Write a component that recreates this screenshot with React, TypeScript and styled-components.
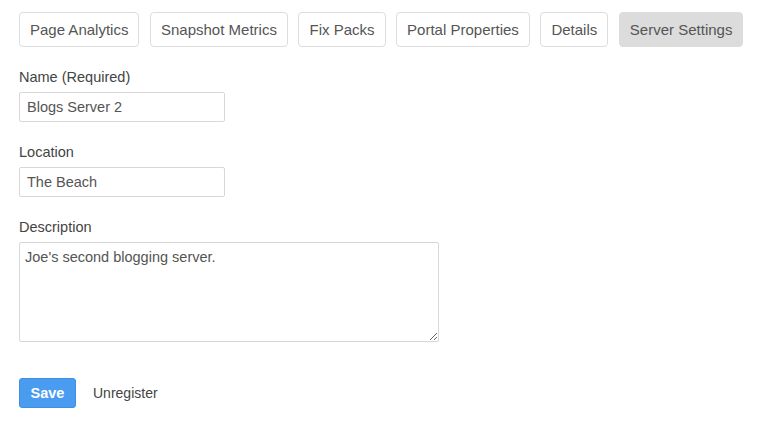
import React from "react";
import styled, { createGlobalStyle } from "styled-components";

const Global = createGlobalStyle`
  html, body { margin: 0; padding: 0; background: #fff; }
  body { font-family: "Liberation Sans", Arial, Helvetica, sans-serif; color: #555; }
  * { box-sizing: border-box; }
`;

const Page = styled.div`
  padding: 12px 19px 0;
`;

const Tabs = styled.nav`
  display: flex;
  gap: 10.6px;
`;

const Tab = styled.button<{ $active?: boolean }>`
  font-family: inherit;
  font-size: 15px;
  line-height: 20px;
  padding: 0 10px;
  height: 35px;
  color: #555;
  background: ${(p) => (p.$active ? "#dcdcdc" : "#fff")};
  border: 1px solid ${(p) => (p.$active ? "#dcdcdc" : "#dddddd")};
  border-radius: 4px;
  cursor: pointer;
  white-space: nowrap;
`;

const Form = styled.form`
  display: flex;
  flex-direction: column;
  margin-top: 20px;
`;

const Group = styled.div`
  display: flex;
  flex-direction: column;
  align-items: flex-start;
  margin-bottom: 20px;
`;

const Label = styled.label`
  font-size: 14.5px;
  line-height: 20px;
  color: #444;
  margin-bottom: 5px;
`;

const Input = styled.input`
  width: 206px;
  height: 30px;
  padding: 0 7px;
  font-family: inherit;
  font-size: 14.5px;
  color: #555;
  border: 1px solid #d8d8d8;
  border-radius: 2px;
  outline: none;
`;

const TextArea = styled.textarea`
  width: 420px;
  height: 100px;
  padding: 4px 5px;
  font-family: inherit;
  font-size: 14.5px;
  line-height: 20px;
  color: #555;
  border: 1px solid #d8d8d8;
  border-radius: 2px;
  outline: none;
`;

const Actions = styled.div`
  display: flex;
  align-items: center;
  margin-top: 16px;
  gap: 17px;
`;

const SaveButton = styled.button`
  height: 30px;
  width: 57px;
  padding: 0;
  font-family: inherit;
  font-size: 14.5px;
  font-weight: bold;
  color: #fff;
  background: #4a9cf0;
  border: 1px solid #3f90e2;
  border-radius: 3px;
  cursor: pointer;
`;

const LinkButton = styled.button`
  padding: 0;
  font-family: inherit;
  font-size: 14px;
  color: #444;
  background: none;
  border: none;
  cursor: pointer;
`;

const tabs = [
  "Page Analytics",
  "Snapshot Metrics",
  "Fix Packs",
  "Portal Properties",
  "Details",
  "Server Settings",
];

export default function App() {
  return (
    <Page>
      <Global />
      <Tabs>
        {tabs.map((t) => (
          <Tab key={t} $active={t === "Server Settings"}>
            {t}
          </Tab>
        ))}
      </Tabs>
      <Form onSubmit={(e) => e.preventDefault()}>
        <Group>
          <Label htmlFor="name">Name (Required)</Label>
          <Input id="name" defaultValue="Blogs Server 2" />
        </Group>
        <Group>
          <Label htmlFor="location">Location</Label>
          <Input id="location" defaultValue="The Beach" />
        </Group>
        <Group>
          <Label htmlFor="desc">Description</Label>
          <TextArea id="desc" defaultValue="Joe's second blogging server." />
        </Group>
        <Actions>
          <SaveButton type="submit">Save</SaveButton>
          <LinkButton type="button">Unregister</LinkButton>
        </Actions>
      </Form>
    </Page>
  );
}
